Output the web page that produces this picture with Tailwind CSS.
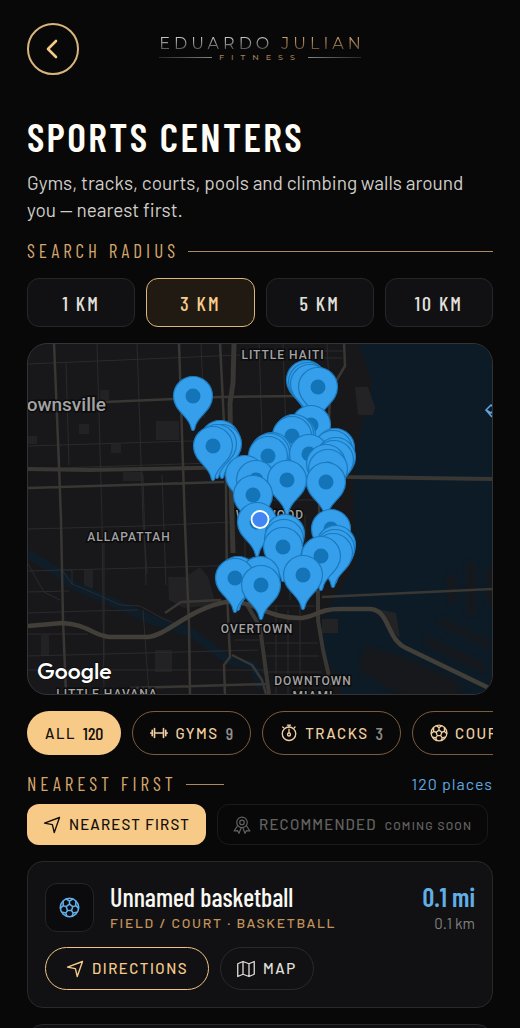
<!DOCTYPE html>
<html lang="en">
  <head>
    <meta charset="UTF-8" />
    <meta name="viewport" content="width=device-width, initial-scale=1.0" />
    <title>Sports Centers</title>
    <script src="https://cdn.jsdelivr.net/npm/@tailwindcss/browser@4"></script>
  </head>
  <body class="bg-[#080808] font-['Barlow','Roboto',sans-serif] text-[#e2e0dc]">
    <!-- shared icons -->
    <svg class="hidden">
      <symbol id="ball" viewBox="0 0 24 24" fill="none" stroke="currentColor" stroke-width="1.8" stroke-linejoin="round" stroke-linecap="round">
        <circle cx="12" cy="12" r="10.5" />
        <path d="M12 8.2l3.8 2.8-1.5 4.5H9.7L8.2 11zM12 8.2V4.8M15.8 11l3.3-1.1M14.3 15.5l2 2.9M9.7 15.5l-2 2.9M8.2 11L4.9 9.9M12 4.8l-3.6-2.5M12 4.8l3.6-2.5M19.1 9.9l.2-4.7M19.1 9.9l3.2 2.8M16.3 18.4l3.9-1M16.3 18.4l-1.3 3.6M7.7 18.4l-3.9-1M7.7 18.4L9 22M4.9 9.9l-.2-4.7M4.9 9.9l-3.2 2.8" />
      </symbol>
      <symbol id="arrow" viewBox="0 0 24 24" fill="none" stroke="currentColor" stroke-width="1.8" stroke-linejoin="round" stroke-linecap="round">
        <path d="M22 2L2 9.5l10.500 2L15 22z" />
      </symbol>
    </svg>

    <div class="h-screen overflow-hidden px-[27px] pt-[23px]">
      <!-- header -->
      <header class="grid grid-cols-[52px_1fr_52px] items-center">
        <button aria-label="Back" class="flex size-[52px] items-center justify-center rounded-full border-2 border-[#d9b57c] text-[#f5c988]">
          <svg class="size-6" viewBox="0 0 24 24" fill="none" stroke="currentColor" stroke-width="2.6" stroke-linecap="round" stroke-linejoin="round">
            <path d="M15 4l-8 8 8 8" />
          </svg>
        </button>
        <div class="flex flex-col items-center font-['Montserrat','Inter',sans-serif]">
          <div class="flex gap-2 pl-1 text-base leading-4 tracking-[4px] text-transparent">
            <span class="bg-linear-to-b from-[#d2d2d2] to-[#45403a] bg-clip-text">EDUARDO</span>
            <span class="bg-linear-to-b from-[#d8ab7c] to-[#5a4128] bg-clip-text">JULIAN</span>
          </div>
          <div class="flex w-[202px] items-center gap-[6px]">
            <span class="h-px flex-1 bg-linear-to-r from-[#2a2928] to-[#858380]"></span>
            <span class="pl-px text-[8px] leading-[10px] font-medium tracking-[7px] text-[#a5805a]">FITNESS</span>
            <span class="h-px flex-1 bg-linear-to-l from-[#2a2928] to-[#858380]"></span>
          </div>
        </div>
      </header>

      <h1 class="mt-[39px] font-['Barlow_Condensed','Liberation_Sans_Narrow',sans-serif] text-[40px] leading-[44px] font-semibold tracking-[0.06em] text-[#fffdf5]">SPORTS CENTERS</h1>
      <p class="mt-[11px] text-[19px] leading-[27px] text-[#d0cec9]">Gyms, tracks, courts, pools and climbing walls around you — nearest first.</p>

      <!-- radius -->
      <div class="mt-[14px] flex items-center gap-[9px]">
        <h2 class="font-['Barlow_Condensed','Liberation_Sans_Narrow',sans-serif] text-[19px] leading-7 tracking-[4px] text-[#d6a66c]">SEARCH RADIUS</h2>
        <span class="h-px flex-1 bg-[#b08a5c]"></span>
      </div>
      <div class="mt-[13px] grid grid-cols-4 gap-[11px] font-['Barlow_Condensed','Liberation_Sans_Narrow',sans-serif] text-xl font-medium tracking-[2px]">
        <button class="h-[49px] rounded-xl border border-[#26272a] bg-[#111113]">1 KM</button>
        <button class="h-[49px] rounded-xl border border-[#dcb67a] bg-[#211a12] text-[#f8cc8c]">3 KM</button>
        <button class="h-[49px] rounded-xl border border-[#26272a] bg-[#111113]">5 KM</button>
        <button class="h-[49px] rounded-xl border border-[#26272a] bg-[#111113]">10 KM</button>
      </div>

      <!-- map -->
      <div class="mt-4 h-[352px] overflow-hidden rounded-[20px] border border-[#333336] bg-[#18181b]">
        <svg class="size-full" viewBox="28 344 464 350" preserveAspectRatio="xMidYMid slice">
          <defs>
            <g id="pin">
              <path d="M0 34.5q-1.500 0-2-3C-4 20-19.500 15-19.500 0a19.500 19.500 0 0 1 39 0C19.500 15 4 20 2 31.500q-.5 3-2 3z" fill="#359fec" stroke="#1b7abd" stroke-width="1.2" />
              <circle r="7.5" fill="#1474b8" />
            </g>
            <filter id="soft" color-interpolation-filters="sRGB"><feGaussianBlur stdDeviation="2" /></filter>
          </defs>
          <!-- parks -->
          <g fill="#222225">
            <path d="M156 421h23v19h-23zM79 424h10v10H79zM100 390h9v10h-9zM111 444h10v9h-10zM28 436h9v8h-9zM123 472h20v9h-20zM168 577l17 0 15-10 8 10 8 28-32 3-15-8zM84 570h9v18h-9zM155 650h17v22h-17zM41 635h8v20h-8z" />
          </g>
          <!-- water -->
          <path d="M359 343l13 40-12 50-7 47 2 85-19 30-18 35 6 25 10 18 8 21h152V343z" fill="#0d1b26" />
          <path d="M28 554l30 18 16 14 36 15 40 18 42 14 36 27 25 5 9 24" fill="none" stroke="#0f1d28" stroke-width="9" />
          <g fill="#17181b" filter="url(#soft)">
            <path d="M448 575h8v28h-8zM467 563h8v52h-8zM487 568h8v36h-8zM365 646l40 12 50 22 10 18h-60l-46-28zM425 636l60 28-2 8-58-28zM440 618l52 24-2 6-52-24z" />
          </g>
          <path d="M355 387l13 0 7 20-2 8h-15zM322 619h16v14h-16zM378 609l18 4 4 25-10-8z" fill="#232326" />
          <!-- minor streets -->
          <g fill="none" stroke="#2b2b2d">
            <path d="M28 364l212-9M97 343l5 177 2 174M137 343l6 177 4 54M66 363l3 102M201 343l3 75M28 446l195-6M28 469l215-7M28 529l115-3 90-4M28 571l220-6M28 592l41-1M28 613l60-2 50-1M28 656l230-6M162 475l4 110M143 475l3 110M104 530v130M143 610l6 84M62 570h10v14M28 634h60M60 600l-16-8-16-28" />
            <path d="M259 343l3 90M283 343l3 90M327 343l3 60M322 351h22M322 358h20M260 606h55M276 605v89M288 610v84M300 600v94M265 643h53M265 656h54M262 672h60M245 480v120M235 500h86M235 558h88M235 640h25M28 670h240M290 515v85M305 515v80M62 570l10 14 24 10 24 11 20 1 22 12 16 7" />
          </g>
          <!-- main roads -->
          <g fill="none" stroke="#393733" stroke-width="2.5" stroke-linejoin="round">
            <path d="M54 343l5 122 2 55 2 100 3 74M179 343l4 122 2 60 4 100 1 69M220 343l4 80 2 60 1 110 3 64-6 8 1 30M344 343l1 23-15 25-2 60M28 488l196-6M105 402l115-5 85-1M320 455l-2 130M322 597l170-8M232 655l20 10 10 15 4 14M130 688l138-4M165 613l16-11 40-2" />
            <path d="M234 343l-1 40-3 20 1 80 2 70" stroke-width="5" />
            <path d="M28 469l60 1 160-3 100 10 145 2" stroke-width="4" />
            <path d="M318 590v30l5 30 8 35M246 603l14 24 4 30 5 37" stroke-width="4" />
          </g>
          <path d="M28 626l34-3c25 1 32 13 48 14h38c20-2 40-28 78-35 30-2 40 17 76 16 16-2 16-9 38-9h30c20 1 16 30 36 39l87 42" fill="none" stroke="#423f39" stroke-width="4.5" />
          <!-- area names -->
          <g class="font-['Roboto',sans-serif] font-medium" fill="#a3a3a3" stroke="#0c0c0d" stroke-width="3" paint-order="stroke" text-anchor="middle" font-size="12" letter-spacing="1">
            <text x="283" y="359">LITTLE HAITI</text>
            <text x="129" y="541">ALLAPATTAH</text>
            <text x="270" y="519">WYNWOOD</text>
            <text x="257" y="633">OVERTOWN</text>
            <text x="313" y="685">DOWNTOWN</text>
            <text x="313" y="700">MIAMI</text>
            <text x="107" y="698">LITTLE HAVANA</text>
            <text x="106" y="411" text-anchor="end" font-size="19" letter-spacing="0">Brownsville</text>
          </g>
          <path d="M486 410l5-5 4 4-4 4zM486 410l6 7" fill="none" stroke="#5fa7dc" stroke-width="1.5" />
          <!-- pins, back to front -->
          <g>
            <use href="#pin" x="306" y="380" /><use href="#pin" x="308" y="382" /><use href="#pin" x="310" y="384" /><use href="#pin" x="318" y="387" />
            <use href="#pin" x="193" y="396" />
            <use href="#pin" x="311" y="425" /><use href="#pin" x="296" y="435" /><use href="#pin" x="294" y="434" /><use href="#pin" x="292" y="436" />
            <use href="#pin" x="220" y="440" /><use href="#pin" x="222" y="444" /><use href="#pin" x="217" y="444" /><use href="#pin" x="213" y="446" />
            <use href="#pin" x="335" y="448" /><use href="#pin" x="333" y="450" /><use href="#pin" x="272" y="452" /><use href="#pin" x="270" y="453" />
            <use href="#pin" x="309" y="454" /><use href="#pin" x="268" y="456" /><use href="#pin" x="336" y="457" /><use href="#pin" x="334" y="460" /><use href="#pin" x="326" y="464" /><use href="#pin" x="328" y="469" />
            <use href="#pin" x="245" y="475" /><use href="#pin" x="256" y="480" /><use href="#pin" x="287" y="480" /><use href="#pin" x="326" y="482" /><use href="#pin" x="253" y="495" />
            <use href="#pin" x="257" y="522" /><use href="#pin" x="331" y="529" /><use href="#pin" x="285" y="534" /><use href="#pin" x="284" y="539" /><use href="#pin" x="336" y="545" /><use href="#pin" x="283" y="547" /><use href="#pin" x="335" y="549" /><use href="#pin" x="333" y="553" />
            <use href="#pin" x="321" y="556" /><use href="#pin" x="303" y="575" /><use href="#pin" x="238" y="576" /><use href="#pin" x="260" y="576" /><use href="#pin" x="235" y="578" /><use href="#pin" x="261" y="585" />
          </g>
          <circle cx="260" cy="519.5" r="8.5" fill="#4285f4" stroke="#fff" stroke-width="1.8" />
          <text x="37" y="679" class="font-['Outfit','Lato',sans-serif] font-medium" font-size="23" fill="#fff" stroke="#111" stroke-width="2" paint-order="stroke">Google</text>
        </svg>
      </div>

      <!-- categories -->
      <div class="mt-4 flex gap-[11px] overflow-hidden text-[15px] font-medium tracking-widest text-[#f0cfa0]">
        <button class="flex h-[44px] shrink-0 items-center gap-[7px] rounded-full bg-[#f7ca88] px-[18px] text-[#14100a]">ALL <span class="font-['Barlow_Condensed','Liberation_Sans_Narrow',sans-serif] text-lg tracking-normal">120</span></button>
        <button class="flex h-[44px] shrink-0 items-center gap-[7px] rounded-full border border-[#7c5c3e] px-[17px]">
          <svg class="size-[18px]" viewBox="0 0 24 24" fill="none" stroke="currentColor" stroke-width="2.2" stroke-linecap="round"><path d="M7 12h10M6 6v12M18 6v12M3 8.5v7M21 8.5v7M1 12h1M22 12h1" /></svg>
          GYMS <span class="font-['Barlow_Condensed','Liberation_Sans_Narrow',sans-serif] text-lg tracking-normal text-[#8f8d8a]">9</span>
        </button>
        <button class="flex h-[44px] shrink-0 items-center gap-[7px] rounded-full border border-[#7c5c3e] px-[17px]">
          <svg class="size-[18px]" viewBox="0 0 24 24" fill="none" stroke="currentColor" stroke-width="1.8" stroke-linecap="round" stroke-linejoin="round"><circle cx="12" cy="13" r="9" /><circle cx="12" cy="14" r="2" /><path d="M12 12V7M10 1.5h4M12 2v2M5 5l-1.500-1M19 5l1-1" /></svg>
          TRACKS <span class="font-['Barlow_Condensed','Liberation_Sans_Narrow',sans-serif] text-lg tracking-normal text-[#8f8d8a]">3</span>
        </button>
        <button class="flex h-[44px] shrink-0 items-center gap-[7px] rounded-full border border-[#7c5c3e] px-[17px]">
          <svg class="size-[18px]"><use href="#ball" /></svg>
          COURTS
        </button>
      </div>

      <!-- sort -->
      <div class="mt-[15px] flex items-center gap-[9px]">
        <h2 class="font-['Barlow_Condensed','Liberation_Sans_Narrow',sans-serif] text-[19px] leading-7 tracking-[4px] text-[#d6a66c]">NEAREST FIRST</h2>
        <span class="h-px w-[38px] bg-[#b08a5c]"></span>
        <span class="ml-auto text-base tracking-[1px] text-[#5fa9e0]">120 places</span>
      </div>
      <div class="mt-[6px] flex gap-[11px] text-[15px] font-medium tracking-[0.08em] whitespace-nowrap">
        <button class="flex h-[41px] items-center gap-2 rounded-xl bg-[#f7ca88] px-4 text-[#14100a]">
          <svg class="size-[18px]"><use href="#arrow" /></svg>
          NEAREST FIRST
        </button>
        <button disabled class="flex h-[41px] items-center gap-2 rounded-xl border border-[#1a1a1b] px-[15px] text-[#636261]">
          <svg class="size-[18px]" viewBox="0 0 24 24" fill="none" stroke="currentColor" stroke-width="1.6" stroke-linejoin="round"><circle cx="12" cy="8.5" r="7" /><circle cx="12" cy="8.5" r="3" /><path d="M6 13l-4.500 7 4.500-.5 2 3.500 3-7.500M18 13l4.500 7-4.500-.5-2 3.500-3-7.500" /></svg>
          RECOMMENDED <span class="text-xs tracking-widest">COMING SOON</span>
        </button>
      </div>

      <!-- results -->
      <article class="mt-4 rounded-2xl border border-[#29292c] bg-[#111113] px-[17px] pt-[19px] pb-[17px]">
        <div class="flex items-center gap-4">
          <div class="flex size-[49px] shrink-0 items-center justify-center rounded-xl border border-[#252528] bg-[#0b0b0d] text-[#62aee6]">
            <svg class="size-[21px]"><use href="#ball" /></svg>
          </div>
          <div class="min-w-0 flex-1">
            <h3 class="font-['Barlow_Condensed','Liberation_Sans_Narrow',sans-serif] text-[26px] leading-8 font-medium whitespace-nowrap text-[#faf8f2]">Unnamed basketball</h3>
            <p class="text-sm leading-5 font-medium tracking-[0.12em] whitespace-nowrap text-[#c2935c]">FIELD / COURT · BASKETBALL</p>
          </div>
          <div class="text-right whitespace-nowrap">
            <p class="font-['Barlow_Condensed','Liberation_Sans_Narrow',sans-serif] text-[26px] leading-8 font-semibold text-[#62aee6]">0.1 mi</p>
            <p class="text-[15px] leading-5 text-[#80807f]">0.1 km</p>
          </div>
        </div>
        <div class="mt-[14px] flex gap-[11px] text-[15px] font-medium tracking-widest">
          <button class="flex h-[43px] items-center gap-2 rounded-full border border-[#f0c486] px-5 text-[#f5cb8c]">
            <svg class="size-[18px]"><use href="#arrow" /></svg>
            DIRECTIONS
          </button>
          <button class="flex h-[43px] items-center gap-2 rounded-full border border-[#2a2a2d] px-4">
            <svg class="size-[18px]" viewBox="0 0 24 24" fill="none" stroke="currentColor" stroke-width="1.7" stroke-linejoin="round"><path d="M1 5l7-3 8 3 7-3v17l-7 3-8-3-7 3zM8 2v17M16 5v17" /></svg>
            MAP
          </button>
        </div>
      </article>
      <article class="mt-4 h-36 rounded-2xl border border-[#29292c] bg-[#111113]"></article>
    </div>
  </body>
</html>
